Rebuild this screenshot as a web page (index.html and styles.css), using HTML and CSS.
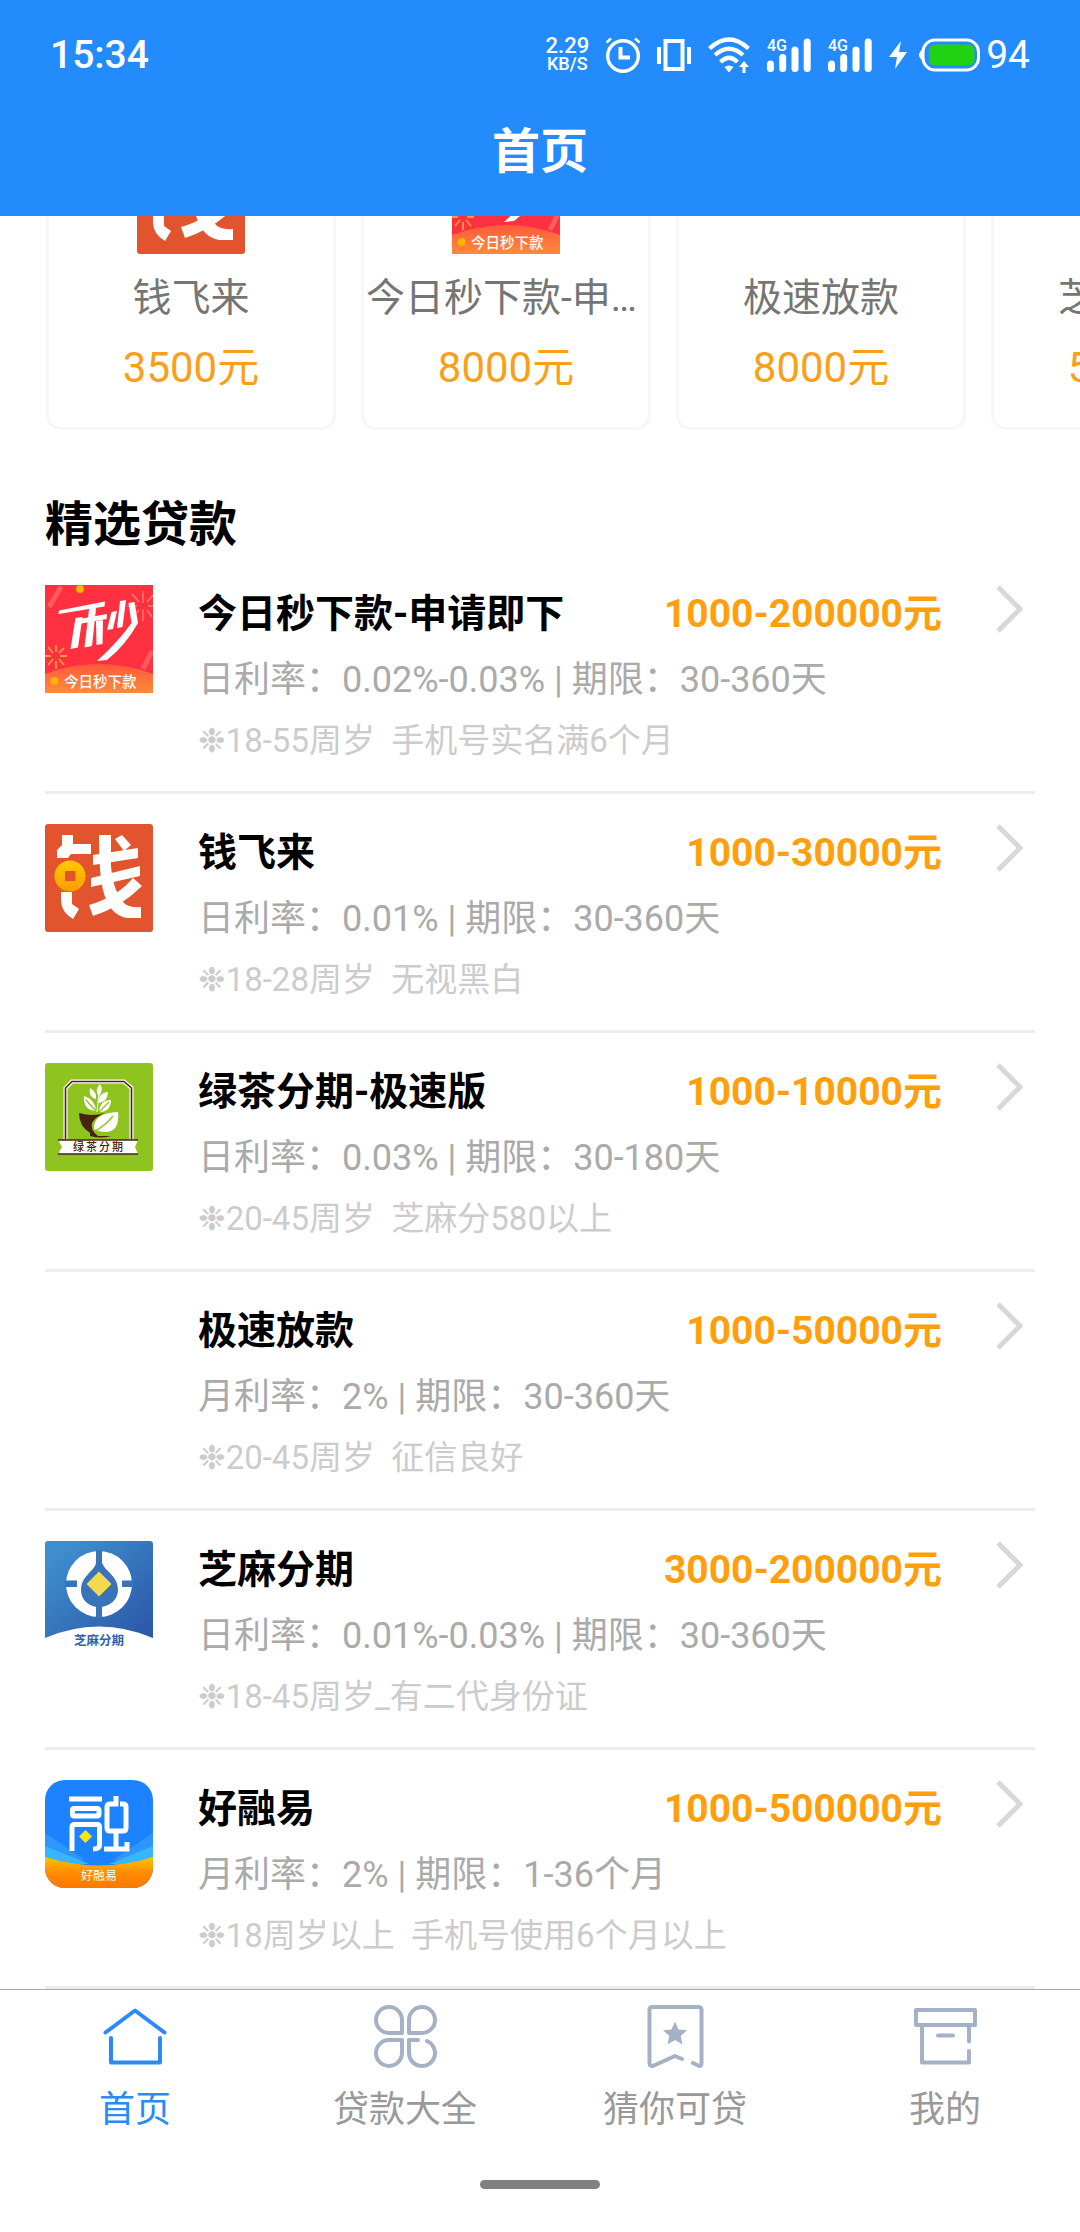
FILE: index.html
```html
<!DOCTYPE html>
<html lang="zh-CN">
<head>
  <meta charset="UTF-8">
  <meta name="viewport" content="width=device-width, initial-scale=1.0">
  <title>首页</title>
  <link rel="stylesheet" href="styles.css">
</head>
<body>
  <!-- shared logos -->
  <svg class="defs" aria-hidden="true">
    <defs>
      <linearGradient id="hill" x1="0" y1="0" x2="0" y2="1">
        <stop offset="0" stop-color="#ff5a3c"/>
        <stop offset="1" stop-color="#ff8a3a"/>
      </linearGradient>
      <linearGradient id="coin" x1="0" y1="0" x2="0" y2="1">
        <stop offset="0" stop-color="#ffcc00"/>
        <stop offset="1" stop-color="#ff9a00"/>
      </linearGradient>
      <linearGradient id="zhima" x1="0" y1="0" x2="1" y2="1">
        <stop offset="0.1" stop-color="#3f8fcf"/>
        <stop offset="1" stop-color="#2b55a5"/>
      </linearGradient>
      <linearGradient id="gold" x1="0" y1="0" x2="0" y2="1">
        <stop offset="0" stop-color="#ffc400"/>
        <stop offset="0.5" stop-color="#ff8c00"/>
        <stop offset="1" stop-color="#ff7800"/>
      </linearGradient>
      <clipPath id="round"><rect width="108" height="108" rx="20"/></clipPath>
      <clipPath id="square"><rect width="108" height="108"/></clipPath>
    </defs>
    <symbol id="logo-miao" viewBox="0 0 108 108">
      <g clip-path="url(#square)">
        <rect width="108" height="108" fill="#ff3040"/>
        <path d="M4 22L16 2M98 84L107 66" stroke="#ff5b63" stroke-width="5"/>
        <g stroke="#ff7b6a" stroke-width="1.5">
          <path d="M98 18V6M98 24V36M92 21H82M103 21H108M94 17L87 9M102 17L108 10M94 25L86 33M102 25L107 32"/>
        </g>
        <g stroke="#ff9a3a" stroke-width="1.8">
          <path d="M11 67V60M11 76V84M6 71H0M15 71H22M8 68L3 62M14 68L19 63M8 74L3 80M14 74L19 80"/>
        </g>
        <circle cx="35" cy="4" r="4" fill="#ffb400"/>
        <path d="M0 89Q54 69 108 89V108H0Z" fill="url(#hill)"/>
        <circle cx="9.500" cy="96" r="4" fill="#ffb400"/>
        <!-- tilted strokes of the emblem -->
        <g fill="#fff">
          <path d="M14 25.500L60 16.500L59.500 21.500L13.500 29Z"/>
          <path d="M30.500 33L37.500 32L33 62.500L25.500 64Z"/>
          <path d="M44.500 20L51.500 19L47 61L39.500 62.500Z"/>
          <path d="M51 36L58 35L57.500 59L51.500 60Z"/>
          <path d="M31.500 34.500L62 29L61.500 34L31 39.500Z"/>
          <path d="M66.500 27L72 26L68 44L62 45Z"/>
          <path d="M75 16L81 15L77.500 42L72 43Z"/>
          <path d="M83.500 18L89.500 17L93 38Q80 61 62 75L52 76Q73 57 86.500 38Z"/>
        </g>
        <text x="19" y="102" class="logo-text" font-size="14.500" font-weight="500" fill="#fff">今日秒下款</text>
      </g>
    </symbol>
    <symbol id="logo-qian" viewBox="0 0 108 108">
      <rect width="108" height="108" rx="3" fill="#e2542d"/>
      <g fill="#fff">
        <path d="M17 11H28V20H46V30H26L23 34H12V26L17 21Z"/>
        <path d="M16 68H27V80L34 85L28 95Q16 88 16 76Z"/>
        <path d="M48 31L93 24V34L48 41ZM46 54L95 42V52L46 63Z"/>
        <path d="M54 11H66V42Q68 68 80 80Q87 84 96 83V94H82Q64 91 58 66Q54 50 54 11Z"/>
        <path d="M70 15L77 11L86 21L79 27Z"/>
        <path d="M88 54L97 62Q76 83 48 92L44 81Q72 73 88 54Z"/>
      </g>
      <circle cx="25" cy="52" r="15.500" fill="url(#coin)"/>
      <rect x="20" y="47" width="10.500" height="10" fill="#e2542d"/>
    </symbol>
  </svg>

  <div class="app">
    <header class="header">
      <div class="status-bar">
        <span class="clock">15:34</span>
        <div class="status-icons">
          <div class="net-speed"><span class="speed">2.29</span><span class="unit">KB/S</span></div>
          <svg width="34" height="36" viewBox="0 0 34 36" fill="none" stroke="#fff">
            <circle cx="17" cy="19" r="15.300" stroke-width="3.400"/>
            <path d="M14.500 10V20.500H24" stroke-width="4"/>
            <path d="M0.500 5.500L5 1.500M33.500 5.500L29 1.500" stroke-width="2.500"/>
          </svg>
          <svg width="34" height="34" viewBox="0 0 34 34" fill="none" stroke="#fff" stroke-width="4">
            <path d="M8.500 3H25.500V31H8.500Z"/>
            <path d="M2 9V26M32 9V26"/>
          </svg>
          <svg width="42" height="36" viewBox="0 0 42 36" fill="none" stroke="#fff" stroke-width="4.200">
            <path d="M1.500 11.500Q21 -6.500 40.500 11.500M7 18Q21 5.500 35 18M12.500 25Q21 16.500 29.500 25"/>
            <path d="M16.500 30Q21 27 25.500 30L21 35.500Z" fill="#fff" stroke="none"/>
            <path d="M36 24L41 30H37.500V36H34.500V30H31Z" fill="#fff" stroke="none"/>
          </svg>
          <svg width="44" height="34" viewBox="0 0 44 34" stroke="#fff" stroke-width="7" stroke-linecap="round">
            <path d="M3.500 26V30.500M15.700 19.500V30.500M28 12V30.500M40.200 4V30.500"/>
            <text x="0" y="12.500" class="sig-text" font-size="16" font-weight="500" fill="#fff" stroke="none">4G</text>
          </svg>
          <svg width="44" height="34" viewBox="0 0 44 34" stroke="#fff" stroke-width="7" stroke-linecap="round">
            <path d="M3.500 26V30.500M15.700 19.500V30.500M28 12V30.500M40.200 4V30.500"/>
            <text x="0" y="12.500" class="sig-text" font-size="16" font-weight="500" fill="#fff" stroke="none">4G</text>
          </svg>
          <div class="battery">
            <svg width="18" height="28" viewBox="0 0 18 28" fill="#fff"><path d="M12 0L0 16H8L6 28L18 11H10Z"/></svg>
            <svg class="cell" width="61" height="34" viewBox="0 0 61 34">
              <path d="M4 11Q0 14 0 17Q0 20 4 23Z" fill="#fff"/>
              <rect x="4" y="2" width="55.500" height="30" rx="12" fill="none" stroke="#fff" stroke-width="3"/>
              <rect x="10" y="6.500" width="45.500" height="21" rx="6" fill="#20d213"/>
            </svg>
            <span class="level">94</span>
          </div>
        </div>
      </div>
      <h1 class="page-title">首页</h1>
    </header>

    <main class="content">
      <div class="cards">
        <a class="card" href="#">
          <svg class="logo"><use href="#logo-qian"/></svg>
          <span class="card-name">钱飞来</span>
          <span class="card-price">3500元</span>
        </a>
        <a class="card" href="#">
          <svg class="logo"><use href="#logo-miao"/></svg>
          <span class="card-name">今日秒下款-申请即下</span>
          <span class="card-price">8000元</span>
        </a>
        <a class="card" href="#">
          <span class="logo"></span>
          <span class="card-name">极速放款</span>
          <span class="card-price">8000元</span>
        </a>
        <a class="card" href="#">
          <span class="logo"></span>
          <span class="card-name">芝麻分期</span>
          <span class="card-price">5000元</span>
        </a>
      </div>

      <h2 class="section-title">精选贷款</h2>

      <div class="loan-list">
        <a class="loan" href="#">
          <svg class="logo"><use href="#logo-miao"/></svg>
          <div class="loan-body">
            <div class="loan-head"><h3>今日秒下款-申请即下</h3><strong>1000-200000元</strong></div>
            <p class="rate">日利率：0.02%-0.03% | 期限：30-360天</p>
            <p class="note">❉18-55周岁  手机号实名满6个月</p>
          </div>
          <svg class="arrow" viewBox="0 0 27 48"><path d="M2 2L24 24L2 46"/></svg>
        </a>
        <a class="loan" href="#">
          <svg class="logo"><use href="#logo-qian"/></svg>
          <div class="loan-body">
            <div class="loan-head"><h3>钱飞来</h3><strong>1000-30000元</strong></div>
            <p class="rate">日利率：0.01% | 期限：30-360天</p>
            <p class="note">❉18-28周岁  无视黑白</p>
          </div>
          <svg class="arrow" viewBox="0 0 27 48"><path d="M2 2L24 24L2 46"/></svg>
        </a>
        <a class="loan" href="#">
          <svg class="logo" viewBox="0 0 108 108">
            <rect width="108" height="108" rx="3" fill="#8fc31f"/>
            <path d="M20.500 77V25L27 18.500H79L86.500 25V77" fill="none" stroke="#fff" stroke-width="4"/>
            <path d="M20.500 77V25L27 18.500H79L86.500 25V77" fill="none" stroke="#4a2413" stroke-width="1.600"/>
            <path d="M34 50Q48 54 60 50Q50 54 47 60Q45 67 53 73H66Q56 76 45 73V70Q34 63 34 50Z" fill="#4a2413"/>
            <g fill="#fff">
              <path d="M49 66Q48 50 73 49Q75 68 61 69Q55 69 51 67Z"/>
              <path d="M39 33Q50 36 51 48Q38 47 39 33Z"/>
              <path d="M66 37Q55 37 54 49Q66 49 66 37Z"/>
              <path d="M45 25Q52 29 51 36Q43 34 45 25Z"/>
              <path d="M63 29Q54 29 53 40Q63 39 63 29Z"/>
              <path d="M55 21Q49 27 54 33Q59 27 55 21Z"/>
            </g>
            <path d="M50 68Q60 63 68 53M41 37L51 48M64 39L54 49" stroke="#8fc31f" stroke-width="1.300" fill="none"/>
            <path d="M52 49L54 30" stroke="#fff" stroke-width="1"/>
            <path d="M13 77H93L90 84L93 91H13L17 84Z" fill="#fff"/>
            <path d="M13 77H93M13 91H93" stroke="#4a2413" stroke-width="1.300"/>
            <text x="28" y="88" class="logo-text spaced" font-size="11" font-weight="500" fill="#4a2413">绿茶分期</text>
          </svg>
          <div class="loan-body">
            <div class="loan-head"><h3>绿茶分期-极速版</h3><strong>1000-10000元</strong></div>
            <p class="rate">日利率：0.03% | 期限：30-180天</p>
            <p class="note">❉20-45周岁  芝麻分580以上</p>
          </div>
          <svg class="arrow" viewBox="0 0 27 48"><path d="M2 2L24 24L2 46"/></svg>
        </a>
        <a class="loan" href="#">
          <span class="logo"></span>
          <div class="loan-body">
            <div class="loan-head"><h3>极速放款</h3><strong>1000-50000元</strong></div>
            <p class="rate">月利率：2% | 期限：30-360天</p>
            <p class="note">❉20-45周岁  征信良好</p>
          </div>
          <svg class="arrow" viewBox="0 0 27 48"><path d="M2 2L24 24L2 46"/></svg>
        </a>
        <a class="loan" href="#">
          <svg class="logo" viewBox="0 0 108 108">
            <path d="M0 97V3Q0 0 3 0H105Q108 0 108 3V97Q54 74 0 97Z" fill="url(#zhima)"/>
            <circle cx="54" cy="43" r="33" fill="#fff"/>
            <path d="M54 21C54 21 52 24 46 30C40 36 36 41 36 49C36 59 44 66 54 66S73 59 73 49C73 41 69 36 63 30C57 24 54 21 54 21Z" fill="#3973b9"/>
            <path d="M51 9H57V22Q59 27 64 32H44Q50 27 51 22ZM51 65H57V77H51ZM20 39.500H32V46H20ZM77 39.500H88V46H77Z" fill="#3973b9"/>
            <path d="M54 30.500L66.500 43L54 55.500L41.500 43Z" fill="#f2d94e"/>
            <text x="54" y="103.500" text-anchor="middle" class="logo-text" font-size="12.500" font-weight="700" fill="#2d62ae">芝麻分期</text>
          </svg>
          <div class="loan-body">
            <div class="loan-head"><h3>芝麻分期</h3><strong>3000-200000元</strong></div>
            <p class="rate">日利率：0.01%-0.03% | 期限：30-360天</p>
            <p class="note">❉18-45周岁_有二代身份证</p>
          </div>
          <svg class="arrow" viewBox="0 0 27 48"><path d="M2 2L24 24L2 46"/></svg>
        </a>
        <a class="loan" href="#">
          <svg class="logo" viewBox="0 0 108 108">
            <g clip-path="url(#round)">
              <rect width="108" height="108" fill="#1d82ff"/>
              <path d="M0 53L40 80L0 85ZM108 53L68 80L108 85Z" fill="#2f96ff"/>
              <path d="M0 66L44 84L0 85ZM108 66L64 84L108 85Z" fill="#38b6fb"/>
              <path d="M0 77Q54 94 108 77V108H0Z" fill="url(#gold)"/>
            </g>
            <g fill="none" stroke="#fff" stroke-width="5">
              <path d="M24 19H57M28 28.500H52Q54 28.500 54 30.500V34Q54 36 52 36H29Q27.500 36 27.500 34V30Q27.500 28.500 29 28.500ZM27 71V47Q27 44.500 30 44.500H52Q54.500 44.500 54.500 47V65Q54.500 69 48 69"/>
              <path d="M71 16V24H65Q62 24 62 27V48Q62 51 65 51H78Q81 51 81 48V27Q81 24 78 24H75M71 51V69H59M71 69H82V62"/>
            </g>
            <path d="M40.500 50L47 56.500L40.500 63L34 56.500Z" fill="#ffe600"/>
            <text x="54" y="100" text-anchor="middle" class="logo-text" font-size="12" fill="#fff">好融易</text>
          </svg>
          <div class="loan-body">
            <div class="loan-head"><h3>好融易</h3><strong>1000-500000元</strong></div>
            <p class="rate">月利率：2% | 期限：1-36个月</p>
            <p class="note">❉18周岁以上  手机号使用6个月以上</p>
          </div>
          <svg class="arrow" viewBox="0 0 27 48"><path d="M2 2L24 24L2 46"/></svg>
        </a>
      </div>
    </main>

    <footer class="footer">
      <nav class="tabs">
        <a class="tab active" href="#">
          <svg viewBox="0 0 66 66"><path d="M3.500 29.500L33 7.500L62.500 29.500M9 35V59.500H58V35"/></svg>
          <span>首页</span>
        </a>
        <a class="tab" href="#">
          <svg viewBox="0 0 66 66"><path d="M30 30H17A13 13 0 1 1 30 17ZM37 30H50A13 13 0 1 0 37 17ZM30 37H17A13 13 0 1 0 30 50ZM46 37H37V50A13 13 0 1 0 55 38"/></svg>
          <span>贷款大全</span>
        </a>
        <a class="tab" href="#">
          <svg viewBox="0 0 66 66">
            <path d="M40 56L33 53L12 62.500Q7.500 64 7.500 60V7Q7.500 4 10.500 4H56.500Q59.500 4 59.500 7V60Q59.500 64 56 62.500L51 60"/>
            <path class="solid" d="M33 18.500L36.500 26.500L45 27.300L38.700 33L40.500 41.500L33 37L25.500 41.500L27.300 33L21 27.300L29.500 26.500Z"/>
          </svg>
          <span>猜你可贷</span>
        </a>
        <a class="tab" href="#">
          <svg viewBox="0 0 66 66"><path d="M4 7H63V22H4ZM10 22V59.500H57V48M57 22V38.500M26 32.500H41"/></svg>
          <span>我的</span>
        </a>
      </nav>
      <div class="home-bar"></div>
    </footer>
  </div>
</body>
</html>
```
FILE: styles.css
```css
* {
  box-sizing: border-box;
}
body {
  margin: 0;
  background: #fff;
  color: #000;
  font-family: Roboto, "Noto Sans CJK SC", "DejaVu Sans", sans-serif;
}
h1, h2, h3, p {
  margin: 0;
}
a {
  color: inherit;
  text-decoration: none;
}
svg {
  display: block;
  flex: none;
}
.defs {
  position: absolute;
  width: 0;
  height: 0;
}
.app {
  display: flex;
  flex-direction: column;
  height: 100vh;
}

/* header */
.header {
  flex: none;
  background: #238bfc;
  color: #fff;
}
.status-bar {
  display: flex;
  justify-content: space-between;
  align-items: center;
  padding: 25px 50px 0;
  line-height: 60px;
  font-size: 39px;
}
.clock {
  font-weight: 500;
}
.status-icons {
  display: flex;
  align-items: center;
  gap: 17px;
}
.net-speed {
  display: flex;
  flex-direction: column;
  align-items: center;
  font-weight: 500;
}
.speed {
  font-size: 22px;
  line-height: 18px;
}
.unit {
  font-size: 18px;
  line-height: 18px;
}
.battery {
  display: flex;
  align-items: center;
}
.cell {
  margin: 0 6px 0 12px;
}
.level {
  line-height: 60px;
}
.page-title {
  padding-top: 3px;
  font-size: 48px;
  line-height: 128px;
  text-align: center;
}
.sig-text {
  font-family: Roboto, sans-serif;
}
.logo-text {
  font-family: "Noto Sans CJK SC", sans-serif;
}
.spaced {
  letter-spacing: 2px;
}

/* content stays aligned to the end of the list */
.content {
  flex: 1;
  min-height: 0;
  display: flex;
  flex-direction: column;
  justify-content: flex-end;
  overflow: hidden;
}
.cards {
  display: flex;
  flex: none;
  gap: 25px;
  padding-left: 46px;
}
.card {
  flex: none;
  width: 290px;
  display: flex;
  flex-direction: column;
  align-items: center;
  padding: 30px 0 29px;
  border: 3px solid #f7f7f7;
  border-radius: 15px;
}
.logo {
  flex: none;
  width: 108px;
  height: 108px;
}
.card-name {
  max-width: 280px;
  margin-top: 16px;
  color: #757575;
  font-size: 39px;
  line-height: 56px;
  white-space: nowrap;
  overflow: hidden;
  text-overflow: ellipsis;
}
.card-price {
  margin-top: 12px;
  color: #f9a01b;
  font-size: 42px;
  line-height: 60px;
}
.section-title {
  margin-top: 65px;
  padding: 0 45px;
  font-size: 48px;
  line-height: 60px;
}
.loan-list {
  padding: 0 45px;
}
.loan {
  display: flex;
  align-items: flex-start;
  padding: 30px 12px 25px 0;
  border-bottom: 3px solid #ededed;
}
.loan-body {
  flex: 1;
  margin: 0 54px 0 45px;
}
.loan-head {
  display: flex;
  justify-content: space-between;
  font-size: 39px;
  line-height: 58px;
}
.loan-head h3 {
  font-size: 39px;
}
.loan-head strong {
  color: #ff9f0e;
}
.rate {
  margin-top: 9px;
  color: #aaa;
  font-size: 36px;
  line-height: 56px;
}
.note {
  margin-top: 8px;
  color: #ccc;
  font-size: 33px;
  line-height: 50px;
  white-space: pre;
}
.arrow {
  width: 27px;
  height: 48px;
  fill: none;
  stroke: #d8d8d8;
  stroke-width: 5;
}

/* bottom tabs */
.footer {
  flex: none;
  border-top: 1px solid #aaa;
}
.tabs {
  display: flex;
  padding-top: 13px;
}
.tab {
  flex: 1;
  display: flex;
  flex-direction: column;
  align-items: center;
  color: #999;
  font-size: 36px;
  line-height: 54px;
}
.tab svg {
  width: 66px;
  height: 66px;
  margin-bottom: 14px;
  fill: none;
  stroke: #a5b1c5;
  stroke-width: 4;
  stroke-linecap: round;
  stroke-linejoin: round;
}
.tab .solid {
  fill: #a5b1c5;
  stroke: none;
}
.tab.active {
  color: #2b8af5;
}
.tab.active svg {
  stroke: #2b8af5;
}
.home-bar {
  width: 120px;
  height: 9px;
  margin: 43px auto;
  border-radius: 5px;
  background: #808080;
}
```
